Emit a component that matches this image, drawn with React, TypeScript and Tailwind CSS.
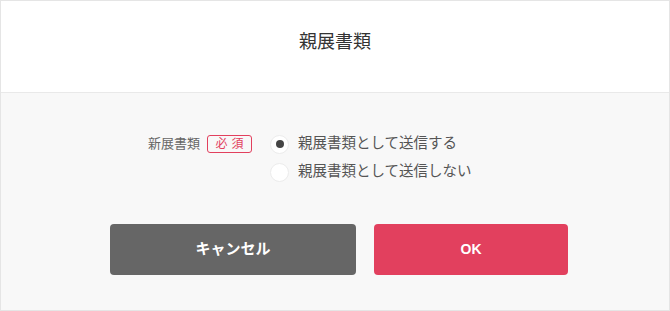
export default function App() {
  const options = ['親展書類として送信する', '親展書類として送信しない']
  const selected = 0

  return (
    <div
      className="flex h-[311px] w-[670px] flex-col border border-[#e5e5e5] bg-white"
      style={{ fontFamily: '"Liberation Sans", "Noto Sans CJK JP", sans-serif' }}
    >
      <div className="flex h-[92px] shrink-0 justify-center border-b border-[#e9e9e9] bg-white pt-[28px]">
        <h1 className="text-[18px] leading-[26px] text-[#333333]">親展書類</h1>
      </div>

      <div className="flex flex-1 flex-col bg-[#f8f8f8] pt-[37px]">
        <div className="flex pl-[147px]">
          <div className="flex h-[28px] items-center">
            <span className="text-[13px] text-[#666666]">新展書類</span>
            <span className="ml-[7px] flex h-[18px] w-[45px] items-center justify-center rounded-[3px] border border-[#e2405e] indent-[4px] text-[12px] tracking-[4px] text-[#e2405e]">
              必須
            </span>
          </div>

          <div className="ml-[18px] flex flex-col">
            {options.map((label, i) => (
              <label key={label} className="flex h-[28px] cursor-pointer items-center gap-[9px]">
                <span className="flex h-[19px] w-[19px] items-center justify-center rounded-full border border-[#ececec] bg-white">
                  {i === selected && <span className="h-[8px] w-[8px] rounded-full bg-[#444444]" />}
                </span>
                <span className="text-[14.5px] text-[#555555]">{label}</span>
              </label>
            ))}
          </div>
        </div>

        <div className="mt-[38px] flex gap-[18px] pl-[109px]">
          <button className="h-[51px] w-[246px] rounded-[4px] bg-[#666666] text-[15px] font-bold text-white">
            キャンセル
          </button>
          <button className="h-[51px] w-[194px] rounded-[4px] bg-[#e2405e] text-[14px] font-bold text-white">
            OK
          </button>
        </div>
      </div>
    </div>
  )
}
